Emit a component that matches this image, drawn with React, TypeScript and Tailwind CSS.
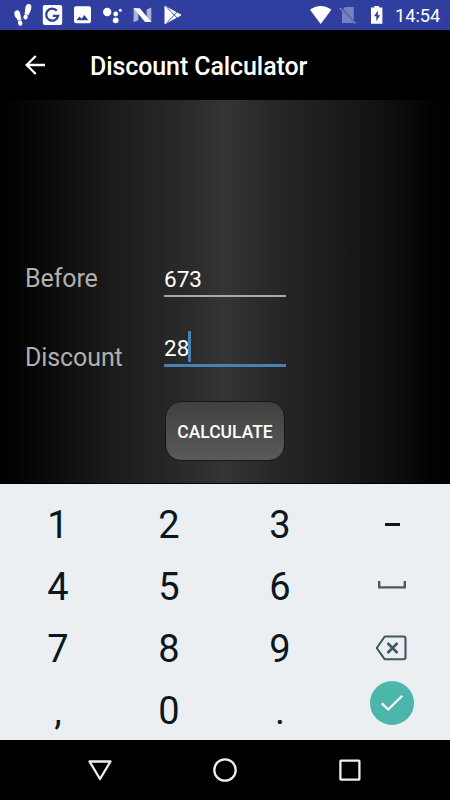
import type { ReactNode } from 'react';

interface FieldProps {
  label: string;
  children: ReactNode;
  className: string;
}

const keys = ['1', '2', '3', 'minus', '4', '5', '6', 'space', '7', '8', '9', 'backspace', ',', '0', '.', 'done'];

function StatusBar() {
  return (
    <div className="flex h-[30px] items-center bg-[#303f9f] text-white">
      {/* Notifications */}
      <svg width="184" height="30" viewBox="0 0 184 30" fill="currentColor">
        <g>
          <ellipse cx="17.4" cy="14.3" rx="2.9" ry="4" transform="rotate(-14 17.4 14.3)" />
          <ellipse cx="20.2" cy="23" rx="2.2" ry="2.7" transform="rotate(-12 20.2 23)" />
          <path d="M15.6 16l4.6-1 1.3 4.6-3.9.9z" />
          <ellipse cx="28.2" cy="8.4" rx="3" ry="4.5" transform="rotate(14 28.2 8.4)" />
          <ellipse cx="25.6" cy="17" rx="2.2" ry="2.5" transform="rotate(14 25.6 17)" />
          <path d="M25.2 9.7l5.1 1-1.5 4.2-4.2-.6z" />
        </g>
        <rect x="42.8" y="5" width="19.4" height="20" rx="2" />
        <path d="M56.8 10.8a6 6 0 1 0 1.3 5h-5.3" fill="none" stroke="#303f9f" strokeWidth="2.3" />
        <path fillRule="evenodd" d="M76 6.3h13a2 2 0 0 1 2 2v13a2 2 0 0 1-2 2H76a2 2 0 0 1-2-2v-13a2 2 0 0 1 2-2zm.5 14h11.8l-3.9-5.2-2.9 3.7-2-2.4z" />
        <circle cx="107.2" cy="12" r="4.2" />
        <circle cx="115.7" cy="14" r="2.4" />
        <circle cx="115.7" cy="20.3" r="2.9" />
        <circle cx="120.3" cy="10.3" r="1.5" />
        <path d="M133.6 7.5l4.7 2v10.8l-4.7 1.9zM151.3 7.5l-4.7 2v10.8l4.7 1.9z" opacity=".6" />
        <path d="M133.6 8.2h6.2l11.5 13.9h-6.2z" />
        <path d="M165 6.4l16 8.6-16 8.6z" stroke="currentColor" strokeLinejoin="round" />
        <path d="M166.8 7.3l10.6 10.9M166.8 22.7l10.6-10.9" fill="none" stroke="#303f9f" strokeWidth=".9" />
      </svg>
      {/* System icons */}
      <svg className="ml-auto" width="80" height="30" viewBox="310 0 80 30" fill="currentColor">
        <path d="M320.7 24L310 9.7c6.2-5.1 15.2-5.1 21.4 0z" />
        <g opacity=".35">
          <path d="M345 7h8.8v13.3L343 9zM342 11.2l11.8 11.7H342z" />
          <path d="M339.8 8l15.6 15.5" stroke="currentColor" strokeWidth="1.5" />
        </g>
        <path fillRule="evenodd" d="M374.3 6h4.8v1.6h3.3v16.2H371V7.6h3.3zm3.5 4.4l-3.8 5.8h2.3v5l3.8-6h-2.3z" />
      </svg>
      <span className="w-[60px] pt-[2px] pl-[5px] text-[18.2px] leading-none">14:54</span>
    </div>
  );
}

function Field({ label, children, className }: FieldProps) {
  return (
    <div className={`flex px-[25px] ${className}`}>
      <label className="h-[30px] w-[139px] text-[25px] leading-[32px] tracking-[-0.1px] text-[#b0b0b0]">{label}</label>
      {children}
    </div>
  );
}

function KeyFace({ name }: { name: string }) {
  switch (name) {
    case 'minus':
      return <span className="ml-[2px] h-[3px] w-[15px] bg-[#0a171e]" />;
    case 'space':
      return (
        <svg className="mb-[4px] ml-[1px]" width="28" height="9" viewBox="0 0 28 9" fill="none" stroke="#455a64" strokeWidth="2.4">
          <path d="M1.2 1v6.4h25.6V1" />
        </svg>
      );
    case 'backspace':
      return (
        <svg width="32" height="26" viewBox="0 0 32 26" fill="none" stroke="#405660" strokeWidth="2.1">
          <path d="M9.8 1.5h18.7a2 2 0 0 1 2 2v18.8a2 2 0 0 1-2 2H9.8L1.7 13z" strokeLinejoin="round" />
          <path d="M12.5 8l10 10M22.5 8l-10 10" strokeWidth="2.5" />
        </svg>
      );
    case 'done':
      return (
        <span className="mb-[15px] ml-[1px] flex h-[44px] w-[44px] items-center justify-center rounded-full bg-[#4db6ac]">
          <svg width="24" height="18" viewBox="0 0 24 18" fill="none" stroke="white" strokeWidth="2.3">
            <path d="M1.8 9.3l6.4 6.2L22.3 1.8" />
          </svg>
        </span>
      );
    default:
      return <span className="pt-[2px]">{name}</span>;
  }
}

export default function App() {
  return (
    <div className="flex h-[800px] w-[450px] flex-col overflow-hidden bg-black font-[Roboto,sans-serif]">
      <StatusBar />

      <header className="flex h-[70px] items-center pl-[25px] text-white">
        <svg width="20" height="20" viewBox="0 0 20 20" fill="none" stroke="currentColor" strokeWidth="2.3">
          <path d="M20 10H2M10.7 1L1.7 10l9 9" />
        </svg>
        <h1 className="ml-[45px] pt-[3px] text-[25px] leading-[30px] font-medium tracking-[-0.1px]">Discount Calculator</h1>
      </header>

      <main className="flex h-[384px] flex-col border-b border-black bg-[linear-gradient(to_right,#000_0%,#030303_4%,#111_16%,#1c1c1c_26%,#252525_36%,#2d2d2d_44%,#343434_50%,#2d2d2d_56%,#222_66%,#1a1a1a_76%,#0e0e0e_87%,#020202_96%,#000_100%)] pt-[163px]">
        <Field label="Before" className="h-[34px]">
          <div className="flex h-[34px] w-[122px] flex-col border-b-2 border-[#a9a9a9] pt-[2px] text-[22.5px] leading-[29px] text-white">
            673
          </div>
        </Field>
        <Field label="Discount" className="mt-[34px] h-[36px] items-end [&>label]:-mb-[5px]">
          <div className="flex h-[36px] w-[122px] border-b-[3px] border-[#4682b4] text-[22.5px] leading-[34px] text-white">
            28
            <span className="-ml-[1px] h-[31px] w-[3px] bg-[#4682b4]" />
          </div>
        </Field>
        <button className="mt-[34px] ml-[165px] h-[60px] w-[120px] rounded-[16px] border border-[#171717] bg-linear-to-b from-[#404040] to-[#5a5a5a] pt-[2px] text-[17.5px] font-medium text-white">
          CALCULATE
        </button>
      </main>

      <div className="grid h-[256px] grid-cols-[repeat(4,111px)] grid-rows-[repeat(4,62px)] bg-[#eceff1] pt-[9px] pl-[2.5px]">
        {keys.map((key) => (
          <div key={key} className="flex items-center justify-center text-[38px] leading-none text-[#0a171e]">
            <KeyFace name={key} />
          </div>
        ))}
      </div>

      <nav className="flex h-[60px] items-center justify-between px-[87px] text-[#eeeeee]">
        <svg width="26" height="24" viewBox="0 0 26 24" fill="none" stroke="currentColor" strokeWidth="2.3" strokeLinejoin="round">
          <path d="M2.5 3.5h21L13 21z" />
        </svg>
        <svg width="26" height="26" viewBox="0 0 26 26" fill="none" stroke="currentColor" strokeWidth="2.3">
          <circle cx="13" cy="13" r="10.7" />
        </svg>
        <svg width="26" height="26" viewBox="0 0 26 26" fill="none" stroke="currentColor" strokeWidth="2.3">
          <rect x="3.4" y="3.7" width="19" height="19" rx=".6" />
        </svg>
      </nav>
    </div>
  );
}
